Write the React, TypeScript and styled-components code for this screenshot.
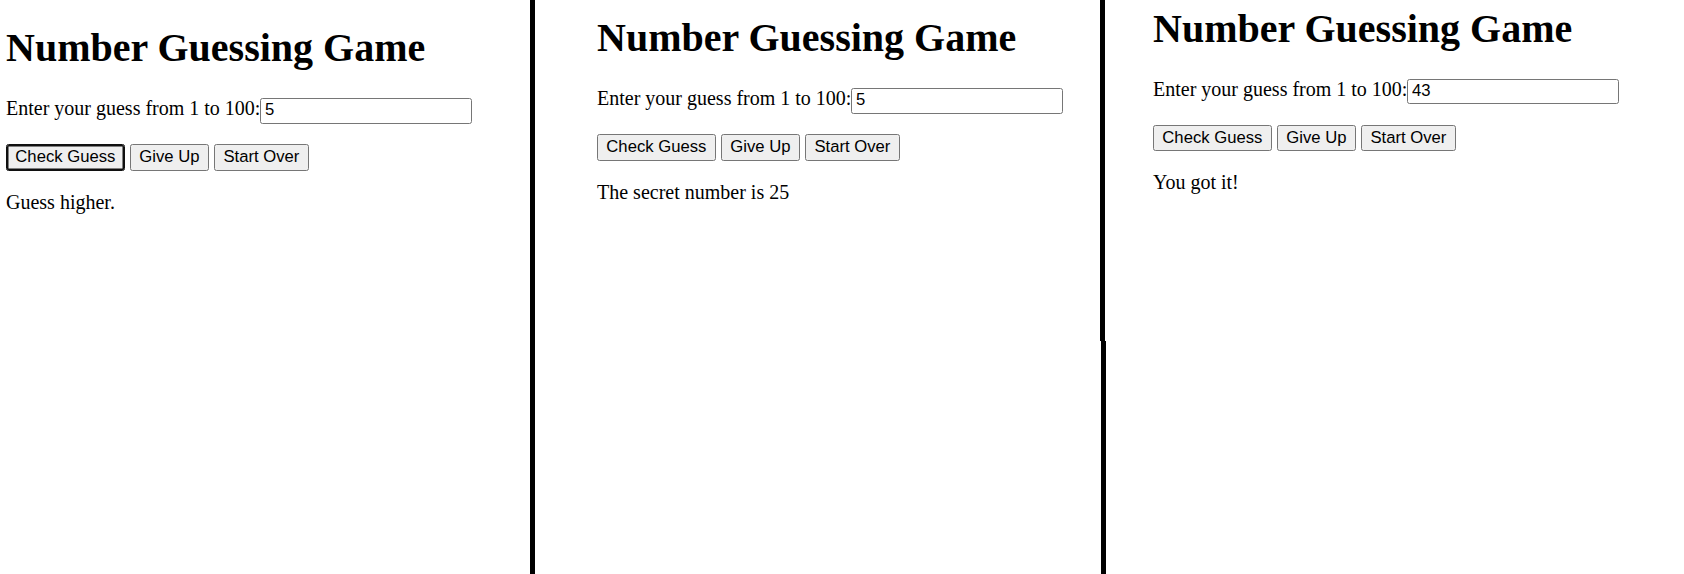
import React from "react";
import styled, { createGlobalStyle } from "styled-components";

const GlobalStyle = createGlobalStyle`
  html, body {
    margin: 0;
    padding: 0;
    background: #ffffff;
  }
  body {
    font-family: "Liberation Serif", "Times New Roman", serif;
    color: #000000;
  }
`;

const Canvas = styled.div`
  display: flex;
  width: 1684px;
  height: 574px;
  overflow: hidden;
  background: #ffffff;
`;

const Panel = styled.section<{ $width?: number; $top: number; $left: number }>`
  flex: ${(p) => (p.$width ? `0 0 ${p.$width}px` : "1 1 auto")};
  box-sizing: border-box;
  padding: ${(p) => p.$top}px 0 0 ${(p) => p.$left}px;
  display: flex;
  flex-direction: column;
  align-items: flex-start;
  min-width: 0;
`;

const Title = styled.h1`
  margin: 0 0 27.1px;
  font-family: "Liberation Serif", "Times New Roman", serif;
  font-size: 40px;
  font-weight: 700;
  line-height: 46px;
  white-space: nowrap;
`;

const GuessRow = styled.div`
  display: flex;
  align-items: baseline;
  margin-bottom: 20.6px;
`;

const Label = styled.label`
  font-size: 20px;
  line-height: 20px;
  white-space: nowrap;
`;

const GuessInput = styled.input`
  box-sizing: border-box;
  width: 211.4px;
  height: 25.4px;
  margin: 0;
  padding: 0 3.5px 1.6px;
  border: 1px solid #767676;
  border-radius: 2.5px;
  background: #ffffff;
  color: #000000;
  font-family: "Liberation Sans", Arial, sans-serif;
  font-size: 16.67px;
  outline: none;
`;

const ButtonRow = styled.div`
  display: flex;
  gap: 5.3px;
  margin-bottom: 20px;
`;

const ActionButton = styled.button<{ $focused?: boolean }>`
  box-sizing: border-box;
  height: 26.4px;
  margin: 0;
  padding: 0 8.35px;
  border: 1px solid ${(p) => (p.$focused ? "#101010" : "#767676")};
  border-radius: 2.5px;
  background: #efefef;
  color: #000000;
  font-family: "Liberation Sans", Arial, sans-serif;
  font-size: 16.67px;
  line-height: 1;
  white-space: nowrap;
  box-shadow: ${(p) => (p.$focused ? "inset 0 0 0 1.5px #101010" : "none")};
  outline: none;
`;

const Message = styled.p`
  margin: 0;
  font-size: 20px;
  line-height: 23px;
  white-space: nowrap;
`;

const Divider = styled.div`
  flex: 0 0 5px;
  background: #000000;
`;

const SplitDivider = styled.div`
  flex: 0 0 6px;
  display: flex;
  flex-direction: column;
`;

const DividerSegment = styled.div<{ $shift: number; $height?: number }>`
  width: 5px;
  margin-left: ${(p) => p.$shift}px;
  background: #000000;
  flex: ${(p) => (p.$height ? `0 0 ${p.$height}px` : "1 1 auto")};
`;

type GameShot = {
  width?: number;
  top: number;
  left: number;
  value: string;
  message: string;
  focused: boolean;
};

const shots: GameShot[] = [
  { width: 530, top: 25.2, left: 6, value: "5", message: "Guess higher.", focused: true },
  { width: 565, top: 15.2, left: 62, value: "5", message: "The secret number is 25", focused: false },
  { top: 5.7, left: 47, value: "43", message: "You got it!", focused: false },
];

function GamePanel({ shot }: { shot: GameShot }) {
  return (
    <Panel $width={shot.width} $top={shot.top} $left={shot.left}>
      <Title>Number Guessing Game</Title>
      <GuessRow>
        <Label>Enter your guess from 1 to 100:</Label>
        <GuessInput type="text" defaultValue={shot.value} />
      </GuessRow>
      <ButtonRow>
        <ActionButton $focused={shot.focused}>Check Guess</ActionButton>
        <ActionButton>Give Up</ActionButton>
        <ActionButton>Start Over</ActionButton>
      </ButtonRow>
      <Message>{shot.message}</Message>
    </Panel>
  );
}

export default function App() {
  return (
    <>
      <GlobalStyle />
      <Canvas>
        <GamePanel shot={shots[0]} />
        <Divider />
        <GamePanel shot={shots[1]} />
        <SplitDivider>
          <DividerSegment $shift={0} $height={341} />
          <DividerSegment $shift={1} />
        </SplitDivider>
        <GamePanel shot={shots[2]} />
      </Canvas>
    </>
  );
}
